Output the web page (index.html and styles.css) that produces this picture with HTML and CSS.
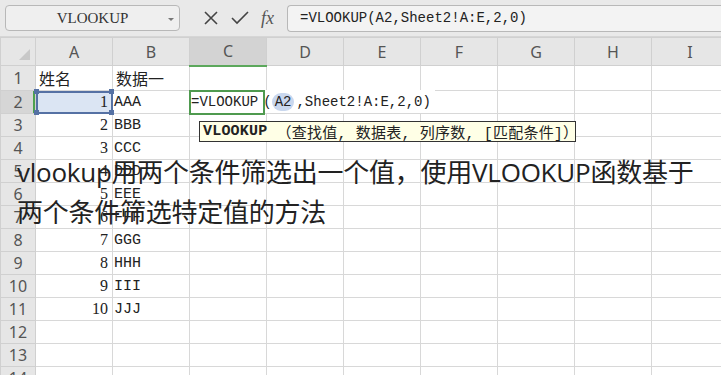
FILE: index.html
```html
<!DOCTYPE html>
<html lang="zh-CN">
<head>
    <meta charset="UTF-8">
    <title>vlookup</title>
    <link rel="stylesheet" href="styles.css">
</head>
<body>

    <div class="toolbar">
        <div class="namebox">
            <span>VLOOKUP</span>
            <span class="arrow"></span>
        </div>
        <div class="tools">
            <svg width="16" height="16" viewBox="0 0 16 16"><path d="M2 2 L14 14 M14 2 L2 14" stroke="#444" stroke-width="1.6" fill="none"/></svg>
            <svg width="18" height="16" viewBox="0 0 18 16"><path d="M1 8 L6 13 L17 2" stroke="#444" stroke-width="1.6" fill="none"/></svg>
            <span class="fx">fx</span>
        </div>
        <div class="formula">=VLOOKUP(A2,Sheet2!A:E,2,0)</div>
    </div>

    <table class="sheet">
        <tr class="head">
            <th class="corner"><span class="tri"></span></th>
            <th>A</th><th>B</th><th class="cur">C</th><th>D</th><th>E</th><th>F</th><th>G</th><th>H</th><th>I</th>
        </tr>
        <tr><th>1</th><td class="txt">姓名</td><td class="txt">数据一</td><td></td><td></td><td></td><td></td><td></td><td></td><td></td></tr>
        <tr class="currow"><th class="mark">2</th><td class="num sel">1<i class="h tl"></i><i class="h tr"></i><i class="h bl"></i><i class="h br"></i></td><td class="val">AAA</td>
            <td class="edit"><div class="input">=VLOOKUP<span class="paren">(</span><span class="ref">A2</span>,Sheet2!A:E,2,0)</div></td>
            <td></td><td></td><td></td><td></td><td></td><td></td></tr>
        <tr><th>3</th><td class="num">2</td><td class="val">BBB</td><td></td><td></td><td></td><td></td><td></td><td></td><td></td></tr>
        <tr><th>4</th><td class="num">3</td><td class="val">CCC</td><td></td><td></td><td></td><td></td><td></td><td></td><td></td></tr>
        <tr><th>5</th><td class="num">4</td><td class="val">DDD</td><td></td><td></td><td></td><td></td><td></td><td></td><td></td></tr>
        <tr><th>6</th><td class="num">5</td><td class="val">EEE</td><td></td><td></td><td></td><td></td><td></td><td></td><td></td></tr>
        <tr><th>7</th><td class="num">6</td><td class="val">FFF</td><td></td><td></td><td></td><td></td><td></td><td></td><td></td></tr>
        <tr><th>8</th><td class="num">7</td><td class="val">GGG</td><td></td><td></td><td></td><td></td><td></td><td></td><td></td></tr>
        <tr><th>9</th><td class="num">8</td><td class="val">HHH</td><td></td><td></td><td></td><td></td><td></td><td></td><td></td></tr>
        <tr><th>10</th><td class="num">9</td><td class="val">III</td><td></td><td></td><td></td><td></td><td></td><td></td><td></td></tr>
        <tr><th>11</th><td class="num">10</td><td class="val">JJJ</td><td></td><td></td><td></td><td></td><td></td><td></td><td></td></tr>
        <tr><th>12</th><td></td><td></td><td></td><td></td><td></td><td></td><td></td><td></td><td></td></tr>
        <tr><th>13</th><td></td><td></td><td></td><td></td><td></td><td></td><td></td><td></td><td></td></tr>
        <tr><th>14</th><td></td><td></td><td></td><td></td><td></td><td></td><td></td><td></td><td></td></tr>
    </table>

    <div class="tip"><b>VLOOKUP</b> （查找值, 数据表, 列序数, [匹配条件]）</div>

    <div class="caption">vlookup用两个条件筛选出一个值，使用VLOOKUP函数基于<br>两个条件筛选特定值的方法</div>

</body>
</html>
```

FILE: styles.css
```css
body {
    margin: 0;
    width: 721px;
    height: 375px;
    overflow: hidden;
    position: relative;
    background-color: #fff;
    font-family: "Noto Sans CJK SC", sans-serif;
}
.toolbar {
    height: 37px;
    background-color: #e9e9e9;
    display: flex;
    align-items: center;
    border-bottom: 1px solid #d6d6d6;
    box-sizing: border-box;
}
.namebox {
    width: 175px;
    height: 26px;
    margin-left: 5px;
    box-sizing: border-box;
    border: 1px solid #b8b8b8;
    border-radius: 4px;
    background-color: #efefef;
    display: flex;
    align-items: center;
    justify-content: center;
    position: relative;
    font-family: "Liberation Serif", serif;
    font-size: 15px;
    color: #333;
}
.arrow {
    position: absolute;
    right: 5px;
    top: 12px;
    border-left: 3px solid transparent;
    border-right: 3px solid transparent;
    border-top: 3px solid #777;
}
.tools {
    display: flex;
    align-items: center;
    gap: 12px;
    margin-left: 23px;
    width: 84px;
}
.fx {
    font-family: "Liberation Serif", serif;
    font-style: italic;
    font-size: 18px;
    color: #555;
}
.formula {
    flex: 1;
    height: 27px;
    box-sizing: border-box;
    border: 1px solid #b8b8b8;
    border-right: none;
    border-radius: 4px 0 0 4px;
    background-color: #f3f3f3;
    padding-left: 12px;
    display: flex;
    align-items: center;
    font-family: "Liberation Mono", monospace;
    font-size: 14px;
    color: #222;
}
.sheet {
    border-collapse: collapse;
    table-layout: fixed;
    width: 728px;
}
.sheet th, .sheet td {
    height: 23px;
    padding: 0;
    border: 1px solid #d8d8d8;
    box-sizing: border-box;
    width: 77px;
    white-space: nowrap;
}
.sheet th {
    width: 35px;
    background-color: #e6e6e6;
    font-family: "Noto Sans", sans-serif;
    font-weight: normal;
    font-size: 16px;
    color: #555;
    border-color: #d0d0d0;
}
.sheet .head th {
    height: 28px;
    width: 77px;
}
.sheet .head th.corner {
    width: 35px;
    position: relative;
}
.tri {
    position: absolute;
    right: 5px;
    bottom: 5px;
    border-left: 11px solid transparent;
    border-bottom: 11px solid #c8c8c8;
}
.sheet .head th.cur {
    background-color: #d3d3d3;
    border-bottom: 2px solid #5ca85c;
}
.currow th {
    background-color: #d6d6d6;
}
.sheet th.mark {
    box-shadow: inset -2px 0 0 #4ea24e;
}
.txt {
    font-size: 16px;
    color: #222;
    padding-left: 3px !important;
}
.num {
    text-align: right;
    padding-right: 4px !important;
    font-family: "Liberation Serif", serif;
    font-size: 16px;
    color: #222;
}
.val {
    font-family: "Liberation Mono", monospace;
    font-size: 15px;
    color: #222;
    padding-left: 1px !important;
}
.sel {
    background-color: #dbe5f3;
    outline: 2px solid #5571a4;
    outline-offset: -2px;
    position: relative;
}
.h {
    position: absolute;
    width: 5px;
    height: 5px;
    background-color: #5571a4;
}
.tl { left: -2px; top: -2px; }
.tr { right: -2px; top: -2px; }
.bl { left: -2px; bottom: -2px; }
.br { right: -2px; bottom: -2px; }
.edit {
    position: relative;
    overflow: visible;
}
.input {
    position: absolute;
    left: -1px;
    top: -1px;
    height: 23px;
    display: flex;
    align-items: center;
    padding-left: 2px;
    padding-right: 4px;
    font-family: "Liberation Mono", monospace;
    font-size: 14px;
    color: #222;
    background-color: #fff;
}
.input::before {
    content: "";
    position: absolute;
    left: 0;
    top: 0;
    width: 72px;
    height: 21px;
    border: 2px solid #4f9a4f;
}
.paren {
    margin-left: 5px;
}
.ref {
    background-color: #c9d7ee;
    border-radius: 9px;
    padding: 1px 3px;
    margin-right: 2px;
}
.tip {
    position: absolute;
    left: 199px;
    top: 121px;
    height: 21px;
    width: 377px;
    box-sizing: border-box;
    border: 1px solid #333;
    background-color: #ffffe6;
    padding-left: 3px;
    display: flex;
    align-items: center;
    font-family: "Liberation Mono", "Noto Sans CJK SC", monospace;
    font-size: 15px;
    letter-spacing: 0.2px;
    color: #222;
    white-space: pre;
}
.tip b {
    font-weight: bold;
}
.caption {
    position: absolute;
    left: 17px;
    top: 152px;
    font-family: "Open Sans", "Noto Sans CJK SC", sans-serif;
    font-size: 26px;
    line-height: 40px;
    color: #222;
    letter-spacing: -0.25px;
    white-space: nowrap;
}
```
